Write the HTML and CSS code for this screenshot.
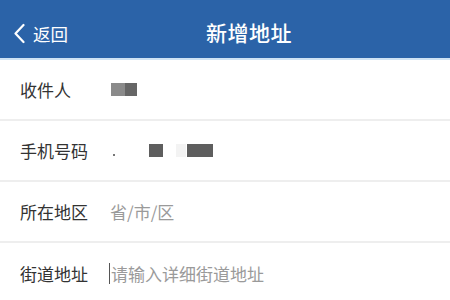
FILE: index.html
```html
<!DOCTYPE html>
<html lang="zh-CN">
<head>
<meta charset="utf-8">
<link rel="stylesheet" href="styles.css">
</head>
<body>
<header class="nav">
  <div class="back">
    <svg class="chev" width="12" height="21" viewBox="0 0 12 21"><path d="M10.5 2 L2.5 10.5 L10.5 19" fill="none" stroke="#fff" stroke-width="2.2" stroke-linecap="round" stroke-linejoin="round"/></svg>
    <span>返回</span>
  </div>
  <div class="title">新增地址</div>
</header>
<main class="form">
  <div class="row">
    <span class="label">收件人</span>
    <span class="value">
      <span class="blot b1"></span><span class="blot b2"></span>
    </span>
  </div>
  <div class="row">
    <span class="label">手机号码</span>
    <span class="value">
      <span class="dot"></span><span class="blot b3"></span><span class="blot b4"></span><span class="blot b5"></span>
    </span>
  </div>
  <div class="row">
    <span class="label">所在地区</span>
    <span class="placeholder">省/市/区</span>
  </div>
  <div class="row last">
    <span class="label">街道地址</span>
    <span class="caret"></span><span class="placeholder">请输入详细街道地址</span>
  </div>
</main>
</body>
</html>
```
FILE: styles.css
```css
* { box-sizing: border-box; }
html, body { margin: 0; padding: 0; background: #fff; }
body {
  width: 450px;
  height: 300px;
  overflow: hidden;
  font-family: "Noto Sans CJK SC", "Noto Sans", sans-serif;
}
.nav {
  position: relative;
  height: 60px;
  background: #2b63a8;
  border-bottom: 2px solid #cfe3f4;
  display: flex;
  align-items: center;
  justify-content: center;
  color: #fff;
}
.back {
  position: absolute;
  left: 13px;
  top: 23px;
  display: flex;
  align-items: center;
  gap: 8px;
  font-size: 17.5px;
  line-height: 21px;
}
.chev { display: block; }
.title {
  font-size: 21px;
  font-weight: 500;
  padding-top: 5px;
  margin-left: 48px;
  letter-spacing: 0.5px;
}
.form { display: flex; flex-direction: column; }
.row {
  height: 61px;
  border-bottom: 2px solid #eeeeee;
  display: flex;
  align-items: center;
  padding-left: 20px;
}
.row.last { border-bottom: none; }
.label {
  width: 90px;
  font-size: 17px;
  color: #333;
  flex: none;
}
.value {
  display: flex;
  align-items: center;
  height: 20px;
}
.placeholder {
  font-size: 17px;
  color: #9a9a9a;
}
.caret {
  width: 1px;
  height: 21px;
  background: #555;
  margin-left: -1px;
  margin-right: 1px;
}
.blot { display: block; height: 13px; }
.b1 { width: 14px; background: #8a8a8a; margin-left: 1px; }
.b2 { width: 12px; background: #666; }
.dot { width: 2px; height: 2px; background: #777; margin-left: 3px; margin-top: 8px; }
.b3 { width: 14px; background: #5e5e5e; margin-left: 34px; }
.b4 { width: 10px; background: #f3f3f3; margin-left: 13px; }
.b5 { width: 26px; background: #5e5e5e; margin-left: 1px; }
```
